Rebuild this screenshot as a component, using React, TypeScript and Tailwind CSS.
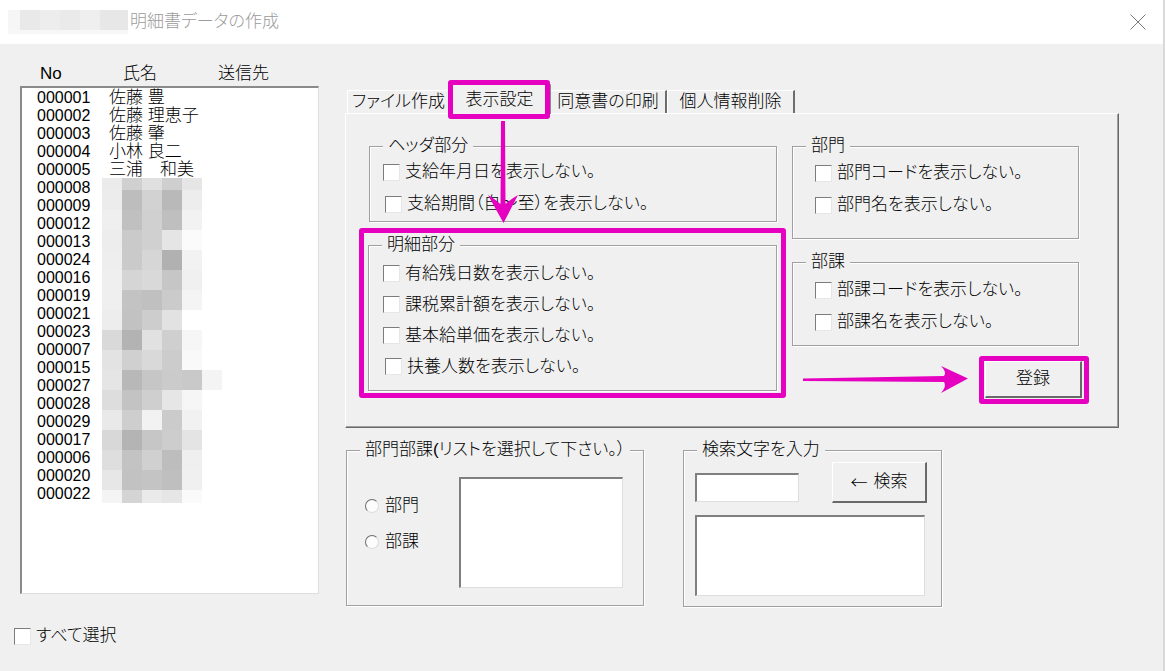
import React from 'react';

const MOSAIC: { h: string; cells: string[] }[] = [
  { h: 'h-[12px]', cells: ['bg-[#ebebeb]', 'bg-[#d0d0d0]', 'bg-[#e0e0e0]', 'bg-[#cfcfcf]', 'bg-[#e6e6e6]'] },
  { h: 'h-[20px]', cells: ['bg-[#ececec]', 'bg-[#bdbdbd]', 'bg-[#d2d2d2]', 'bg-[#b9b9b9]', 'bg-[#ededed]'] },
  { h: 'h-[20px]', cells: ['bg-[#efefef]', 'bg-[#c0c0c0]', 'bg-[#d0d0d0]', 'bg-[#bfbfbf]', 'bg-[#f2f2f2]'] },
  { h: 'h-[20px]', cells: ['bg-[#ededed]', 'bg-[#cacaca]', 'bg-[#d0d0d0]', 'bg-[#e5e5e5]', 'bg-[#fbfbfb]'] },
  { h: 'h-[20px]', cells: ['bg-[#eeeeee]', 'bg-[#cacaca]', 'bg-[#d6d6d6]', 'bg-[#b1b1b1]', 'bg-[#f2f2f2]'] },
  { h: 'h-[20px]', cells: ['bg-[#efefef]', 'bg-[#d5d5d5]', 'bg-[#d9d9d9]', 'bg-[#c6c6c6]', 'bg-[#f0f0f0]'] },
  { h: 'h-[20px]', cells: ['bg-[#efefef]', 'bg-[#c3c3c3]', 'bg-[#c0c0c0]', 'bg-[#cbcbcb]', 'bg-[#f4f4f4]'] },
  { h: 'h-[20px]', cells: ['bg-[#ededed]', 'bg-[#c2c2c2]', 'bg-[#cdcdcd]', 'bg-[#e2e2e2]', 'bg-[#ffffff]'] },
  { h: 'h-[20px]', cells: ['bg-[#d9d9d9]', 'bg-[#b3b3b3]', 'bg-[#e1e1e1]', 'bg-[#cfcfcf]', 'bg-[#f6f6f6]'] },
  { h: 'h-[20px]', cells: ['bg-[#e3e3e3]', 'bg-[#d0d0d0]', 'bg-[#d9d9d9]', 'bg-[#cccccc]', 'bg-[#f9f9f9]'] },
  { h: 'h-[20px]', cells: ['bg-[#e5e5e5]', 'bg-[#b8b8b8]', 'bg-[#c6c6c6]', 'bg-[#cbcbcb]', 'bg-[#c9c9c9]', 'bg-[#f4f4f4]'] },
  { h: 'h-[20px]', cells: ['bg-[#dddddd]', 'bg-[#c3c3c3]', 'bg-[#cfcfcf]', 'bg-[#e6e6e6]', 'bg-[#f6f6f6]'] },
  { h: 'h-[20px]', cells: ['bg-[#e9e9e9]', 'bg-[#cecece]', 'bg-[#f2f2f2]', 'bg-[#cbcbcb]', 'bg-[#f1f1f1]'] },
  { h: 'h-[20px]', cells: ['bg-[#d8d8d8]', 'bg-[#b4b4b4]', 'bg-[#c6c6c6]', 'bg-[#cdcdcd]', 'bg-[#e4e4e4]'] },
  { h: 'h-[20px]', cells: ['bg-[#dedede]', 'bg-[#c3c3c3]', 'bg-[#d0d0d0]', 'bg-[#bdbdbd]', 'bg-[#efefef]'] },
  { h: 'h-[20px]', cells: ['bg-[#e7e7e7]', 'bg-[#c2c2c2]', 'bg-[#c4c4c4]', 'bg-[#bfbfbf]', 'bg-[#f0f0f0]'] },
  { h: 'h-[13px]', cells: ['bg-[#f4f4f4]', 'bg-[#d4d4d4]', 'bg-[#eaeaea]', 'bg-[#e6e6e6]', 'bg-[#fafafa]'] },
];

const ROWS: [string, string][] = [
  ['000001', '佐藤 豊'],
  ['000002', '佐藤 理恵子'],
  ['000003', '佐藤 肇'],
  ['000004', '小林 良二'],
  ['000005', '三浦　和美'],
  ['000008', ''],
  ['000009', ''],
  ['000012', ''],
  ['000013', ''],
  ['000024', ''],
  ['000016', ''],
  ['000019', ''],
  ['000021', ''],
  ['000023', ''],
  ['000007', ''],
  ['000015', ''],
  ['000027', ''],
  ['000028', ''],
  ['000029', ''],
  ['000017', ''],
  ['000006', ''],
  ['000020', ''],
  ['000022', ''],
];

function CheckBox() {
  return (
    <span className="inline-block w-[17px] h-[17px] shrink-0 bg-white border border-t-[#7c7c7c] border-l-[#7c7c7c] border-r-[#e6e6e6] border-b-[#e6e6e6]" />
  );
}

function CheckRow({ label, className }: { label: string; className: string }) {
  return (
    <div className={`flex items-center gap-[5px] ${className}`}>
      <CheckBox />
      <span>{label}</span>
    </div>
  );
}

function GroupBox({
  title,
  className,
  children,
}: {
  title: string;
  className: string;
  children?: React.ReactNode;
}) {
  return (
    <div
      className={`relative border border-[#a0a0a0] shadow-[1px_1px_0_#ffffff,inset_1px_1px_0_#ffffff] ${className}`}
    >
      <span className="absolute left-[13px] -top-[11px] px-[5px] bg-[#f0f0f0] leading-[20px] whitespace-nowrap">
        {title}
      </span>
      {children}
    </div>
  );
}

function Radio({ label }: { label: string }) {
  return (
    <div className="h-[36px] flex items-center gap-[6px]">
      <span className="inline-block w-[14px] h-[14px] rounded-full bg-[#fcfcfc] border-[1.5px] border-t-[#6f6f6f] border-l-[#6f6f6f] border-r-[#dcdcdc] border-b-[#dcdcdc]" />
      <span>{label}</span>
    </div>
  );
}

function TitleBar() {
  return (
    <div className="h-[44px] bg-white flex items-center">
      <div className="ml-[8px] w-[120px] h-[24px] flex flex-col">
        <div className="flex h-[20px]">
          <div className="w-[12px] bg-[#f6f6f6]" />
          <div className="w-[20px] bg-[#e9e9e9]" />
          <div className="w-[20px] bg-[#ededed]" />
          <div className="w-[20px] bg-[#eaeaea]" />
          <div className="w-[20px] bg-[#efefef]" />
          <div className="w-[28px] bg-[#e7e7e7]" />
        </div>
        <div className="flex h-[4px] bg-[#f7f7f7]" />
      </div>
      <span className="ml-[2px] text-[#9b9b9b]">明細書データの作成</span>
      <svg className="ml-auto mr-[17px]" width="16" height="16" viewBox="0 0 16 16">
        <path d="M0.5 0.5 L15.5 15.5 M15.5 0.5 L0.5 15.5" stroke="#7a7a7a" strokeWidth="1" fill="none" />
      </svg>
    </div>
  );
}

function LeftCol() {
  return (
    <div className="w-[299px] pt-[20px] flex flex-col">
      <div className="h-[22px] flex items-start pl-[20px]">
        <span className="w-[83px]">No</span>
        <span className="w-[95px]">氏名</span>
        <span>送信先</span>
      </div>
      <div className="relative h-[508px] bg-white border-t-2 border-l-2 border-r border-b border-t-[#8a8a8a] border-l-[#8a8a8a] border-r-[#dedede] border-b-[#dedede] pt-[1px]">
        {ROWS.map(([no, name]) => (
          <div key={no} className="h-[18px] leading-[18px] flex pl-[15px]">
            <span className="w-[72px] text-[16px]">{no}</span>
            <span className="whitespace-pre">{name}</span>
          </div>
        ))}
        <div className="absolute left-[80px] top-[90px] flex flex-col">
          {MOSAIC.map((r, i) => (
            <div key={i} className={`flex ${r.h}`}>
              {r.cells.map((c, j) => (
                <div key={j} className={`w-[20px] h-full ${c}`} />
              ))}
            </div>
          ))}
        </div>
      </div>
      <div className="mt-[32px] -ml-[6px] h-[20px] flex items-center gap-[5px]">
        <CheckBox />
        <span>すべて選択</span>
      </div>
    </div>
  );
}

function Tabs() {
  return (
    <div className="relative h-[33px] flex items-end pl-[2px]">
      <div className="w-[102px] h-[23px] flex items-center justify-center border-t border-l border-t-white border-l-white">
        ファイル作成
      </div>
      <div className="relative z-10 -mb-[1px] w-[102px] h-[30px] flex items-center justify-center bg-[#f0f0f0] border-t border-l border-r-2 border-t-white border-l-white border-r-[#8a8a8a]">
        表示設定
      </div>
      <div className="w-[116px] h-[23px] flex items-center justify-center border-t border-r-2 border-t-white border-r-[#6d6d6d]">
        同意書の印刷
      </div>
      <div className="w-[128px] h-[23px] flex items-center justify-center border-t border-l border-r-2 border-t-white border-l-white border-r-[#6d6d6d]">
        個人情報削除
      </div>
      <div className="absolute z-20 left-[103px] top-0 w-[102px] h-[39px] border-[5px] border-[#e600bf] rounded-[3px]" />
    </div>
  );
}

function Panel() {
  return (
    <div className="w-[774px] h-[315px] border border-t-white border-l-white border-r-[#696969] border-b-[#696969] shadow-[inset_-1px_-1px_0_#a0a0a0] flex pt-[32px] pl-[13px] gap-[6px]">
      <div className="w-[427px] flex flex-col">
        <GroupBox title="ヘッダ部分" className="ml-[10px] w-[408px] h-[76px] pt-[9px] pl-[13px]">
          <CheckRow label="支給年月日を表示しない。" className="h-[32px]" />
          <CheckRow label="支給期間（自～至）を表示しない。" className="h-[32px] ml-[2px]" />
        </GroupBox>
        <div className="mt-[6px] w-[427px] h-[170px] border-[5px] border-[#e600bf] rounded-[3px] pl-[4px] pt-[12px]">
          <GroupBox title="明細部分" className="w-[409px] h-[146px] pt-[12px] pl-[14px]">
            <CheckRow label="有給残日数を表示しない。" className="h-[31px]" />
            <CheckRow label="課税累計額を表示しない。" className="h-[31px]" />
            <CheckRow label="基本給単価を表示しない。" className="h-[31px]" />
            <CheckRow label="扶養人数を表示しない。" className="h-[31px] ml-[2px]" />
          </GroupBox>
        </div>
      </div>
      <div className="w-[287px] flex flex-col">
        <GroupBox title="部門" className="w-[287px] h-[93px] pt-[10px] pl-[22px]">
          <CheckRow label="部門コードを表示しない。" className="h-[32px]" />
          <CheckRow label="部門名を表示しない。" className="h-[32px]" />
        </GroupBox>
        <GroupBox title="部課" className="mt-[23px] w-[287px] h-[84px] pt-[11px] pl-[22px]">
          <CheckRow label="部課コードを表示しない。" className="h-[32px]" />
          <CheckRow label="部課名を表示しない。" className="h-[32px]" />
        </GroupBox>
        <div className="mt-[10px] ml-[187px] w-[110px] h-[48px] border-[5px] border-[#e600bf] rounded-[3px]">
          <button className="ml-[1px] w-[97px] h-[37px] flex items-center justify-center bg-[#f0f0f0] border-t border-l border-r-2 border-b-2 border-t-white border-l-white border-r-[#696969] border-b-[#696969]">
            登録
          </button>
        </div>
      </div>
    </div>
  );
}

function BottomGroups() {
  return (
    <div className="mt-[22px] pl-[1px] flex gap-[39px]">
      <GroupBox title="部門部課(リストを選択して下さい。）" className="w-[298px] h-[156px] pt-[26px] pl-[18px] flex">
        <div className="w-[94px] mt-[11px] flex flex-col">
          <Radio label="部門" />
          <Radio label="部課" />
        </div>
        <div className="w-[164px] h-[111px] bg-white border-t-2 border-l-2 border-r border-b border-t-[#7f7f7f] border-l-[#7f7f7f] border-r-[#dedede] border-b-[#dedede]" />
      </GroupBox>
      <GroupBox title="検索文字を入力" className="w-[259px] h-[157px] pt-[11px] pl-[11px]">
        <div className="flex items-end">
          <div className="mb-[1px] w-[104px] h-[29px] bg-white border-t-2 border-l-2 border-r border-b border-t-[#7f7f7f] border-l-[#7f7f7f] border-r-[#dedede] border-b-[#dedede]" />
          <button className="ml-[33px] w-[95px] h-[41px] flex items-center justify-center gap-[6px] bg-[#f0f0f0] border-t border-l border-r-2 border-b-2 border-t-white border-l-white border-r-[#696969] border-b-[#696969]">
            <span className="font-['Noto_Sans_CJK_JP',sans-serif] [font-feature-settings:normal]">←</span>
            <span>検索</span>
          </button>
        </div>
        <div className="mt-[12px] w-[230px] h-[81px] bg-white border-t-2 border-l-2 border-r border-b border-t-[#7f7f7f] border-l-[#7f7f7f] border-r-[#dedede] border-b-[#dedede]" />
      </GroupBox>
    </div>
  );
}

function Arrows() {
  return (
    <svg
      className="absolute left-0 top-0 z-30 pointer-events-none"
      width="1165"
      height="671"
      viewBox="0 0 1165 671"
    >
      <path
        d="M501 121 L505 121 L505.5 204 Q511 199 518 195 L503.5 223 L488 195 Q495 199 500.5 204 Z"
        fill="#e600bf"
      />
      <path
        d="M803 378.5 L944 376 Q947 372 941 366 L968 378.5 L941 393 Q947 386 944 382 L803 381 Z"
        fill="#e600bf"
      />
    </svg>
  );
}

export default function App() {
  return (
    <div className="relative w-[1165px] h-[671px] overflow-hidden bg-[#f0f0f0] text-black font-['Liberation_Sans','Noto_Sans_CJK_JP',sans-serif] font-light text-[17px] leading-[20px] [font-feature-settings:'palt'] border-r-2 border-r-[#d9d9d9]">
      <TitleBar />
      <div className="flex pl-[20px]">
        <LeftCol />
        <div className="ml-[26px] pt-[36px] flex flex-col">
          <Tabs />
          <Panel />
          <BottomGroups />
        </div>
      </div>
      <Arrows />
    </div>
  );
}
